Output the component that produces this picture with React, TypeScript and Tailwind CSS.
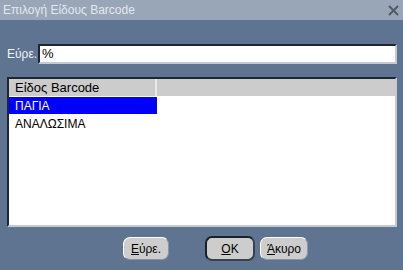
import React from "react";

const font = { fontFamily: '"Liberation Sans", Arial, sans-serif' };

function Btn({
  children,
  isDefault = false,
  className = "",
}: {
  children: React.ReactNode;
  isDefault?: boolean;
  className?: string;
}) {
  return (
    <button
      type="button"
      className={
        "flex items-center justify-center rounded-[7px] bg-[#cdcdcd] text-[12px] text-black " +
        (isDefault
          ? "h-[25px] border-2 border-[#1b1f26] border-r-[#39414d] border-b-[#39414d] "
          : "h-[23px] border border-t-[#ffffff] border-l-[#ffffff] border-r-[#8a94a2] border-b-[#8a94a2] ") +
        className
      }
    >
      {children}
    </button>
  );
}

export default function App() {
  return (
    <div
      className="flex h-[270px] w-[403px] flex-col bg-[#5f7491] text-[12px]"
      style={font}
    >
      <div className="flex h-[20px] items-center justify-between bg-[#98a6b8] pl-[3px] pr-[4px]">
        <span className="text-[12px] text-[#e4e8ee]">Επιλογή Είδους Barcode</span>
        <svg width="11" height="11" viewBox="0 0 11 11">
          <path d="M1 1 L10 10 M10 1 L1 10" stroke="#545a62" strokeWidth="2" />
        </svg>
      </div>

      <div className="mt-[24px] flex h-[20px] items-center pl-[7px]">
        <span className="w-[31px] text-[#f2f4f7]">Εύρε.</span>
        <div className="flex h-[20px] w-[359px] items-center border-2 border-t-[#1d2633] border-l-[#1d2633] border-r-[#c4cad2] border-b-[#c4cad2] bg-white pl-[2px] text-[13px] text-black">
          %
        </div>
      </div>

      <div className="ml-[7px] mt-[13px] flex h-[150px] w-[390px] flex-col border-2 border-t-[#1d2633] border-l-[#1d2633] border-r-[#c4cad2] border-b-[#c4cad2] bg-white">
        <div className="flex h-[17px] bg-[#cccccc]">
          <div className="flex w-[148px] items-center border-r-2 border-[#e8eaee] pl-[6px] text-[13px] text-black">
            Είδος Barcode
          </div>
          <div className="flex-1" />
        </div>
        <div className="mt-[1px] flex h-[17px] w-[148px] items-center bg-[#0000ff] pl-[6px] text-white">
          ΠΑΓΙΑ
        </div>
        <div className="flex h-[19px] items-center pl-[6px] text-black">ΑΝΑΛΩΣΙΜΑ</div>
      </div>

      <div className="mt-[9px] flex items-center pl-[123px]">
        <Btn className="w-[46px]">
          <span>
            <span className="underline">Ε</span>ύρε.
          </span>
        </Btn>
        <Btn isDefault className="ml-[36px] w-[50px]">
          <span>
            <span className="underline">O</span>K
          </span>
        </Btn>
        <Btn className="ml-[5px] w-[48px]">
          <span>
            <span className="underline">Ά</span>κυρο
          </span>
        </Btn>
      </div>
    </div>
  );
}
